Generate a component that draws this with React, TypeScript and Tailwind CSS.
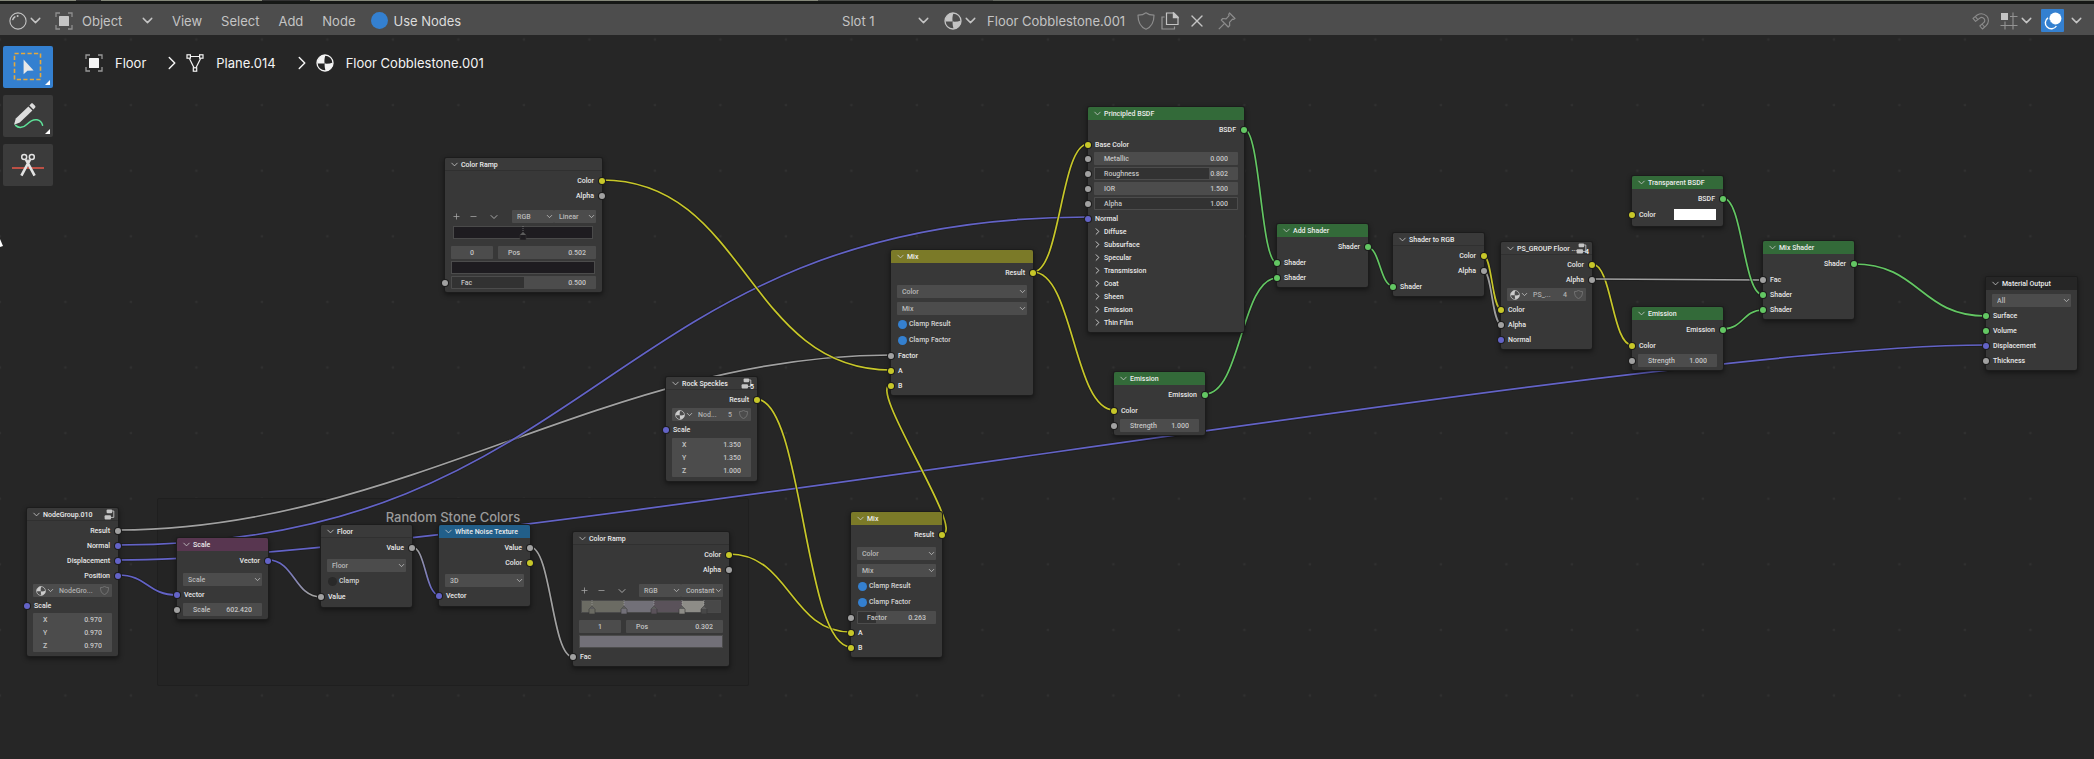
import React, { useId, useState } from 'react';
import { ChevronDown, ChevronRight, Minus, Plus, X } from 'lucide-react';

type Kind = 'color' | 'value' | 'vector' | 'shader';

const SOCKET_BG: Record<Kind, string> = {
  color: 'bg-[#c7c729]',
  value: 'bg-[#a1a1a1]',
  vector: 'bg-[#6363c7]',
  shader: 'bg-[#63c763]',
};

const LINK_COLOR: Record<Kind, string> = {
  color: '#c7c729',
  value: '#a1a1a1',
  vector: '#6363c7',
  shader: '#63c763',
};

/* ---------- links ---------- */

type Link = { from: [number, number]; to: [number, number]; a: Kind; b?: Kind };

const LINKS: Link[] = [
  { from: [118, 530], to: [891, 355], a: 'value' },
  { from: [118, 545], to: [1088, 217], a: 'vector' },
  { from: [118, 560], to: [1986, 345], a: 'vector' },
  { from: [118, 575], to: [177, 595], a: 'vector' },
  { from: [268, 560], to: [321, 597], a: 'vector', b: 'value' },
  { from: [412, 547], to: [439, 595], a: 'value', b: 'vector' },
  { from: [530, 547], to: [573, 657], a: 'value' },
  { from: [729, 554], to: [851, 632], a: 'color' },
  { from: [756, 399], to: [851, 647], a: 'color' },
  { from: [942, 534], to: [891, 385], a: 'color' },
  { from: [602, 180], to: [891, 370], a: 'color' },
  { from: [1033, 272], to: [1088, 144], a: 'color' },
  { from: [1033, 272], to: [1114, 410], a: 'color' },
  { from: [1244, 129], to: [1277, 263], a: 'shader' },
  { from: [1205, 394], to: [1277, 278], a: 'shader' },
  { from: [1367, 247], to: [1393, 286], a: 'shader' },
  { from: [1483, 255], to: [1501, 309], a: 'color' },
  { from: [1483, 270], to: [1501, 324], a: 'value' },
  { from: [1592, 264], to: [1632, 345], a: 'color' },
  { from: [1592, 279], to: [1763, 280], a: 'value' },
  { from: [1723, 198], to: [1763, 295], a: 'shader' },
  { from: [1723, 329], to: [1763, 310], a: 'shader' },
  { from: [1854, 264], to: [1986, 316], a: 'shader' },
];

// flat links get shorter handles, so they stay close to a straight line
function linkPath({ from: [x0, y0], to: [x1, y1] }: Link) {
  const dx = Math.abs(x1 - x0);
  const slope = Math.abs(y1 - y0) / Math.max(dx, 1);
  const handle = 0.5 * dx * Math.min(1, slope * 3.25);
  return `M${x0} ${y0}C${x0 + handle} ${y0} ${x1 - handle} ${y1} ${x1} ${y1}`;
}

function Links() {
  return (
    <svg className="absolute inset-0 size-full" fill="none">
      {LINKS.map((l, i) => {
        const d = linkPath(l);
        const stroke = l.b ? `url(#link-${i})` : LINK_COLOR[l.a];
        return (
          <g key={i}>
            {l.b && (
              <linearGradient id={`link-${i}`} gradientUnits="userSpaceOnUse" x1={l.from[0]} x2={l.to[0]}>
                <stop offset="0.2" stopColor={LINK_COLOR[l.a]} />
                <stop offset="0.8" stopColor={LINK_COLOR[l.b]} />
              </linearGradient>
            )}
            <path d={d} stroke="#1a1a1a" strokeOpacity="0.6" strokeWidth="3.4" />
            <path d={d} stroke={stroke} strokeWidth="1.7" />
          </g>
        );
      })}
    </svg>
  );
}

function Grid() {
  return (
    <svg className="absolute inset-0 size-full">
      <pattern id="grid" width="65.5" height="65.6" x="32.7" y="6.7" patternUnits="userSpaceOnUse">
        <circle cx="32.7" cy="32.8" r="1.3" fill="#303030" />
      </pattern>
      <rect width="100%" height="100%" fill="url(#grid)" />
    </svg>
  );
}

/* ---------- icons ---------- */

type IconProps = { className?: string };

function ObjectIcon({ className = '' }: IconProps) {
  return (
    <svg viewBox="0 0 18 18" className={`size-[18px] ${className}`} fill="none">
      <rect x="4" y="4" width="10" height="10" rx="0.6" fill="currentColor" />
      <path d="M1 5V1h4M13 1h4v4M17 13v4h-4M5 17H1v-4" stroke="currentColor" strokeOpacity="0.55" strokeWidth="1.3" />
    </svg>
  );
}

function MaterialIcon({ className = 'size-[18px]' }: IconProps) {
  return (
    <svg viewBox="0 0 18 18" className={className} fill="none">
      <circle cx="9" cy="9" r="8" stroke="currentColor" strokeWidth="1.3" />
      <path d="M8.6 9.6 1.2 9.6A8 8 0 0 1 9.6 1.1C8.4 3.8 8.2 6.6 8.6 9.6Z" fill="currentColor" />
      <path d="M8.6 9.6C11.6 9.9 14.4 9.5 16.9 8.4A8 8 0 0 1 9.7 17C8.9 14.8 8.5 12.4 8.6 9.6Z" fill="currentColor" />
    </svg>
  );
}

function EditorIcon() {
  return (
    <svg viewBox="0 0 18 18" className="size-[18px]" fill="none" stroke="currentColor">
      <circle cx="9" cy="9" r="8.1" strokeWidth="1.1" />
      <path d="M3.8 7.6C4.2 6.5 4.9 5.6 5.9 4.9" strokeWidth="1.5" strokeLinecap="round" />
      <circle cx="8.6" cy="4" r="1" fill="currentColor" stroke="none" />
    </svg>
  );
}

function MeshIcon() {
  return (
    <svg viewBox="0 0 18 18" className="size-[18px]" fill="none" stroke="currentColor" strokeWidth="1.2">
      <path d="M4 2.5h10M3.4 4.4l4.6 9.4M14.6 4.4 10 13.8" />
      <rect x="1" y="0.8" width="3.4" height="3.4" />
      <rect x="13.6" y="0.8" width="3.4" height="3.4" />
      <rect x="7.3" y="13.8" width="3.4" height="3.4" />
    </svg>
  );
}

function ShieldIcon({ className = 'size-[18px]' }: IconProps) {
  return (
    <svg viewBox="0 0 18 18" className={className} fill="none" stroke="currentColor" strokeWidth="1.2" strokeLinejoin="round">
      <path d="M9 0.8C7 2.4 4.4 3.2 1 3.2C1 9.600 2.600 14.600 9 17.200C15.400 14.600 17 9.600 17 3.200C13.600 3.200 11 2.400 9 0.800Z" />
    </svg>
  );
}

function DuplicateIcon() {
  return (
    <svg viewBox="0 0 18 18" className="size-[18px]" fill="none" stroke="currentColor" strokeWidth="1.2">
      <path d="M5.5 1h7.5l4 4v7.5H5.5z" />
      <path d="M12.4 1v4.6H17z" fill="currentColor" />
      <path d="M3.6 5H1v12h12.5v-2.6" strokeOpacity="0.6" />
    </svg>
  );
}

function PinIcon() {
  return (
    <svg viewBox="0 0 18 18" className="size-[18px]" fill="none" stroke="currentColor" strokeWidth="1.2" strokeLinejoin="round">
      <path d="M11.5 1 17 6.5l-1.6.9-.9-.3-3 3.2.2 3.2-1.5 1.5L3.3 8l1.5-1.5 3.3.3 3-3.1-.4-1.1z" />
      <path d="M6.6 11.4.8 17.2" />
    </svg>
  );
}

function MagnetIcon() {
  return (
    <svg viewBox="0 0 18 18" className="size-[18px]" fill="none" stroke="currentColor" strokeWidth="1.1" strokeLinejoin="round">
      <path d="M1 6.4 5.2 3a8 8 0 0 1 9.6 1.2 6.8 6.8 0 0 1-.6 9.4L10.4 17l-2.6-3 3.6-3.1a3 3 0 0 0-3.6-4.8L3.6 9.4z" />
      <path d="m3.4 4.6 2.4 3M10 12l2.6 3" />
    </svg>
  );
}

function SnapIcon() {
  return (
    <svg viewBox="0 0 18 18" className="size-[18px]" fill="none">
      <path d="M13 0.5v17M5 9.5v8M0.5 13.5h17M10 4.5h7.5" stroke="currentColor" strokeOpacity="0.6" strokeWidth="1.1" />
      <rect x="1" y="1" width="7" height="7" fill="currentColor" />
    </svg>
  );
}

function OverlayIcon() {
  return (
    <svg viewBox="0 0 18 18" className="size-[18px]" fill="none">
      <circle cx="11.4" cy="6.6" r="6" fill="currentColor" />
      <path d="M4 5.8A6 6 0 1 0 12.4 14" stroke="currentColor" strokeWidth="1.4" />
      <path d="M5.6 8.2a6 6 0 0 0 4.4 4.2" stroke="#3480d0" strokeWidth="1.2" strokeDasharray="1.6 1.2" />
    </svg>
  );
}

function GroupIcon() {
  return (
    <svg viewBox="0 0 11 11" className="size-[11px] shrink-0" fill="currentColor">
      <rect x="2.6" y="0.4" width="5.6" height="3.8" rx="1" />
      <rect x="0.6" y="6.2" width="6.4" height="4.2" rx="1" />
      <path d="M8.2 2h1.6v6.4H7" fill="none" stroke="currentColor" strokeWidth="0.9" />
    </svg>
  );
}

/* ---------- node building blocks ---------- */

const HEAD = {
  plain: 'bg-[#3a3a3a] shadow-[inset_0_-1px_#303030]',
  shader: 'bg-[#336a39]',
  color: 'bg-[#7b7a28]',
  vector: 'bg-[#583650]',
  texture: 'bg-[#225f8a]',
  output: 'bg-[#262626]',
};

type NodeProps = {
  title: string;
  x: number;
  y: number;
  tone?: keyof typeof HEAD;
  width?: string;
  group?: string;
  children: React.ReactNode;
};

function Node({ title, x, y, tone = 'plain', width = 'w-[91px]', group, children }: NodeProps) {
  return (
    <section
      className={`absolute ${width} rounded-xs bg-[#383838] pb-[2px] shadow-[0_0_0_1px_#1c1c1c,0_2px_5px_1px_rgba(0,0,0,0.45)]`}
      style={{ left: x, top: y }}
    >
      <header className={`mb-[2px] flex h-[13px] items-center gap-px rounded-t-xs pl-[4px] ${HEAD[tone]}`}>
        <button aria-label="Collapse" className="text-[#c8c8c8]">
          <ChevronDown className="size-[11px]" strokeWidth={1.8} />
        </button>
        <h2 className="w-0 flex-1 whitespace-nowrap text-[#ececec]">{title}</h2>
        {group !== undefined && (
          <span className="flex items-end pr-[3px] text-[#c4c4c4]">
            <GroupIcon />
            {group && <span className="-mb-px -ml-[2px] leading-[6px] text-white">{group}</span>}
          </span>
        )}
      </header>
      {children}
    </section>
  );
}

function Socket({ kind }: { kind: Kind }) {
  return <i className={`relative size-[6px] shrink-0 rounded-full ring-1 ring-[#1c1c1c] ${SOCKET_BG[kind]}`} />;
}

function Out({ kind, children }: { kind: Kind; children: string }) {
  return (
    <div className="-mr-[3px] flex h-[15px] items-center justify-end gap-[5px]">
      {children}
      <Socket kind={kind} />
    </div>
  );
}

type InProps = { kind: Kind; gap?: string; children: React.ReactNode };

function In({ kind, gap = '', children }: InProps) {
  return (
    <div className={`-ml-[3px] flex h-[15px] items-center gap-[4px] ${gap}`}>
      <Socket kind={kind} />
      {children}
    </div>
  );
}

type FieldProps = { name: string; value: string; kind: Kind; fill?: number };

function Field({ name, value, kind, fill }: FieldProps) {
  return (
    <div className="-ml-[3px] flex h-[15px] items-center gap-[3px] pr-[6px]">
      <Socket kind={kind} />
      <NumberBox name={name} value={value} fill={fill} />
    </div>
  );
}

function NumberBox({ name, value, fill }: { name: string; value: string; fill?: number }) {
  const [text, setText] = useState(value);
  return (
    <label className="relative flex h-[13px] min-w-0 flex-1 items-center rounded-[1px] bg-[#4c4c4c] p-px text-[#c4c4c4]">
      {fill !== undefined && <i className="h-full bg-[#323232]" style={{ width: `${fill * 100}%` }} />}
      <span className="absolute inset-0 flex items-center justify-between px-[10px]">
        {name}
        <input className="w-[26px] text-right" value={text} onChange={(e) => setText(e.target.value)} />
      </span>
    </label>
  );
}

function Select({ value, name, gap = '' }: { value: string; name: string; gap?: string }) {
  return (
    <div className={`flex h-[15px] items-center px-[6px] ${gap}`}>
      <SelectBox value={value} name={name} />
    </div>
  );
}

function SelectBox({ value, name }: { value: string; name: string }) {
  return (
    <div className="relative h-[13px] min-w-0 flex-1">
      <select
        aria-label={name}
        className="block size-full appearance-none rounded-[1px] bg-[#4c4c4c] pl-[5px] text-[#bababa]"
        defaultValue={value}
      >
        <option>{value}</option>
      </select>
      <ChevronDown className="pointer-events-none absolute top-[2px] right-0 size-[9px] text-[#c8c8c8]" />
    </div>
  );
}

function Check({ label, checked = false }: { label: string; checked?: boolean }) {
  const id = useId();
  return (
    <div className="flex h-[16px] items-center gap-[2px] pl-[7px] text-[#d4d4d4]">
      <input
        id={id}
        type="checkbox"
        defaultChecked={checked}
        className="size-[9px] appearance-none rounded-full bg-[#292929] checked:bg-[#3480d0]"
      />
      <label htmlFor={id}>{label}</label>
    </div>
  );
}

function DataBlock({ name, users }: { name: string; users?: string }) {
  return (
    <div className="flex h-[15px] items-center px-[6px]">
      <div className="flex h-[13px] w-full items-center rounded-[1px] bg-[#4c4c4c] px-[3px] text-[#b0b0b0]">
        <button aria-label="Browse" className="flex items-center text-[#cccccc]">
          <MaterialIcon className="size-[10px]" />
          <ChevronDown className="size-[9px]" />
        </button>
        <input aria-label="Name" className="ml-[4px] w-0 min-w-0 flex-1" defaultValue={name} />
        {users && <button className="mr-[7px]">{users}</button>}
        <button aria-label="Fake user" className="text-[#8c8c8c]">
          <ShieldIcon className="size-[9px]" />
        </button>
      </div>
    </div>
  );
}

function VectorBox({ value, gap = '' }: { value: string[]; gap?: string }) {
  return (
    <div className={`mx-[6px] mb-[2px] rounded-[1px] bg-[#4c4c4c] px-[10px] text-[#c4c4c4] ${gap}`}>
      {['X', 'Y', 'Z'].map((axis, i) => (
        <label key={axis} className="flex h-[13px] items-center justify-between">
          {axis}
          <input className="w-[26px] text-right" defaultValue={value[i]} />
        </label>
      ))}
    </div>
  );
}

function Panel({ children }: { children: string }) {
  return (
    <button className="flex h-[13px] items-center gap-px pl-[4px]">
      <ChevronRight className="size-[11px]" strokeWidth={1.8} />
      {children}
    </button>
  );
}

type Stop = { at: number; color: string };

type RampProps = {
  stops: Stop[];
  base: string;
  mode: string;
  index: string;
  pos: string;
  swatch: string;
};

function Ramp({ stops, base, mode, index, pos, swatch }: RampProps) {
  return (
    <>
      <div className="mt-[6px] flex h-[15px] items-center px-[6px] text-[#a8a8a8]">
        <button aria-label="Add stop" className="px-px">
          <Plus className="size-[9px]" />
        </button>
        <button aria-label="Remove stop" className="ml-[7px]">
          <Minus className="size-[9px]" />
        </button>
        <button aria-label="Ramp tools" className="ml-[10px]">
          <ChevronDown className="size-[12px]" />
        </button>
        <div className="ml-auto flex w-[84px]">
          <SelectBox name="Color mode" value="RGB" />
          <SelectBox name="Interpolation" value={mode} />
        </div>
      </div>
      <svg viewBox="0 0 142 15" className="mt-px ml-[7px] h-[15px] w-[142px]">
        <rect x="1" y="1" width="140" height="13" fill={base} />
        {stops.map((s, i) => (
          <rect
            key={i}
            x={i ? 1 + s.at : 1}
            y="1"
            width={(stops[i + 1]?.at ?? 140) - (i ? s.at : 0)}
            height="13"
            fill={s.color}
          />
        ))}
        <rect x="1.5" y="1.5" width="139" height="12" fill="none" stroke="#4a4a4a" />
        {stops.map((s, i) => (
          <g key={i}>
            <path d={`M${s.at + 1} 1v7`} stroke="#bbbbbb" strokeOpacity="0.6" strokeWidth="0.8" strokeDasharray="1 1" />
            <path d={`M${s.at - 2} 15v-5l3-3 3 3v5z`} fill={s.color} stroke="#333333" strokeWidth="0.6" />
            <path d={`M${s.at - 2} 10l3-3 3 3z`} fill="#5c5c5c" />
          </g>
        ))}
      </svg>
      <div className="mt-[5px] flex h-[15px] items-center gap-[5px] px-[6px] text-[#c4c4c4]">
        <input
          aria-label="Active stop"
          className="h-[13px] w-[42px] rounded-[1px] bg-[#4c4c4c] text-center"
          defaultValue={index}
        />
        <NumberBox name="Pos" value={pos} />
      </div>
      <button aria-label="Stop color" className={`mx-[6px] mt-px mb-px block h-[13px] w-[144px] border border-[#4c4c4c] ${swatch}`} />
    </>
  );
}

/* ---------- node tree ---------- */

function NodeTree() {
  return (
    <>
      <Node title="NodeGroup.010" x={27} y={508} group="">
        <Out kind="value">Result</Out>
        <Out kind="vector">Normal</Out>
        <Out kind="vector">Displacement</Out>
        <Out kind="vector">Position</Out>
        <DataBlock name="NodeGro..." />
        <In kind="vector">Scale</In>
        <VectorBox value={['0.970', '0.970', '0.970']} />
      </Node>

      <Node title="Scale" x={177} y={538} tone="vector">
        <Out kind="vector">Vector</Out>
        <Select name="Operation" value="Scale" gap="mt-[4px]" />
        <In kind="vector">Vector</In>
        <Field kind="value" name="Scale" value="602.420" />
      </Node>

      <Node title="Floor" x={321} y={525}>
        <Out kind="value">Value</Out>
        <Select name="Operation" value="Floor" gap="mt-[3px]" />
        <Check label="Clamp" />
        <In kind="value" gap="mb-px">Value</In>
      </Node>

      <Node title="White Noise Texture" x={439} y={525} tone="texture">
        <Out kind="value">Value</Out>
        <Out kind="color">Color</Out>
        <Select name="Dimensions" value="3D" gap="mt-[3px]" />
        <In kind="vector" gap="mb-px">Vector</In>
      </Node>

      <Node title="Color Ramp" x={573} y={532} width="w-[156px]">
        <Out kind="color">Color</Out>
        <Out kind="value">Alpha</Out>
        <Ramp
          base="#484848"
          mode="Constant"
          index="1"
          pos="0.302"
          swatch="bg-[#727078]"
          stops={[
            { at: 11, color: '#6b6b63' },
            { at: 43, color: '#727078' },
            { at: 73, color: '#5a525a' },
            { at: 101, color: '#8d8c87' },
            { at: 123, color: '#484848' },
          ]}
        />
        <In kind="value">Fac</In>
      </Node>

      <Node title="Mix" x={851} y={512} tone="color">
        <Out kind="color">Result</Out>
        <Select name="Data type" value="Color" gap="mt-[4px]" />
        <Select name="Blend mode" value="Mix" gap="mt-[2px]" />
        <Check label="Clamp Result" checked />
        <Check label="Clamp Factor" checked />
        <Field kind="value" name="Factor" value="0.263" fill={0.24} />
        <In kind="color">A</In>
        <In kind="color">B</In>
      </Node>

      <Node title="Rock Speckles" x={666} y={377} group="5">
        <Out kind="color">Result</Out>
        <DataBlock name="Nod..." users="5" />
        <In kind="vector">Scale</In>
        <VectorBox value={['1.350', '1.350', '1.000']} gap="mt-px" />
      </Node>

      <Node title="Color Ramp" x={445} y={158} width="w-[157px]">
        <Out kind="color">Color</Out>
        <Out kind="value">Alpha</Out>
        <Ramp
          base="#1e1c20"
          mode="Linear"
          index="0"
          pos="0.502"
          swatch="bg-[#1e1c20]"
          stops={[{ at: 70, color: '#1e1c20' }]}
        />
        <Field kind="value" name="Fac" value="0.500" fill={0.5} />
      </Node>

      <Node title="Mix" x={891} y={250} tone="color" width="w-[142px]">
        <Out kind="color">Result</Out>
        <Select name="Data type" value="Color" gap="mt-[4px]" />
        <Select name="Blend mode" value="Mix" gap="mt-[2px]" />
        <Check label="Clamp Result" checked />
        <Check label="Clamp Factor" checked />
        <In kind="value">Factor</In>
        <In kind="color">A</In>
        <In kind="color">B</In>
      </Node>

      <Node title="Principled BSDF" x={1088} y={107} tone="shader" width="w-[156px]">
        <Out kind="shader">BSDF</Out>
        <In kind="color" gap="-mb-px">Base Color</In>
        <Field kind="value" name="Metallic" value="0.000" />
        <Field kind="value" name="Roughness" value="0.802" fill={0.802} />
        <Field kind="value" name="IOR" value="1.500" />
        <Field kind="value" name="Alpha" value="1.000" fill={1} />
        <In kind="vector" gap="-mb-px">Normal</In>
        <div className="flex flex-col pb-px">
          <Panel>Diffuse</Panel>
          <Panel>Subsurface</Panel>
          <Panel>Specular</Panel>
          <Panel>Transmission</Panel>
          <Panel>Coat</Panel>
          <Panel>Sheen</Panel>
          <Panel>Emission</Panel>
          <Panel>Thin Film</Panel>
        </div>
      </Node>

      <Node title="Emission" x={1114} y={372} tone="shader">
        <Out kind="shader">Emission</Out>
        <In kind="color" gap="mt-px">Color</In>
        <Field kind="value" name="Strength" value="1.000" />
      </Node>

      <Node title="Add Shader" x={1277} y={224} tone="shader">
        <Out kind="shader">Shader</Out>
        <In kind="shader" gap="mt-px">Shader</In>
        <In kind="shader">Shader</In>
      </Node>

      <Node title="Shader to RGB" x={1393} y={233}>
        <Out kind="color">Color</Out>
        <Out kind="value">Alpha</Out>
        <In kind="shader" gap="mt-px">Shader</In>
      </Node>

      <Node title="PS_GROUP Floor ..." x={1501} y={242} group="4">
        <Out kind="color">Color</Out>
        <Out kind="value">Alpha</Out>
        <DataBlock name="PS_..." users="4" />
        <In kind="color">Color</In>
        <In kind="value">Alpha</In>
        <In kind="vector">Normal</In>
      </Node>

      <Node title="Transparent BSDF" x={1632} y={176} tone="shader">
        <Out kind="shader">BSDF</Out>
        <In kind="color" gap="mt-px mb-[2px]">
          Color
          <button aria-label="Color" className="mr-[7px] ml-auto h-[11px] w-[42px] bg-white" />
        </In>
      </Node>

      <Node title="Emission" x={1632} y={307} tone="shader">
        <Out kind="shader">Emission</Out>
        <In kind="color" gap="mt-px">Color</In>
        <Field kind="value" name="Strength" value="1.000" />
      </Node>

      <Node title="Mix Shader" x={1763} y={241} tone="shader">
        <Out kind="shader">Shader</Out>
        <In kind="value" gap="mt-px">Fac</In>
        <In kind="shader">Shader</In>
        <In kind="shader">Shader</In>
      </Node>

      <Node title="Material Output" x={1986} y={277} tone="output">
        <Select name="Target" value="All" gap="mt-[3px]" />
        <In kind="shader">Surface</In>
        <In kind="shader">Volume</In>
        <In kind="vector">Displacement</In>
        <In kind="value">Thickness</In>
      </Node>
    </>
  );
}

function Canvas() {
  return (
    <div className="absolute inset-0 overflow-hidden font-[Roboto,sans-serif] text-[7px] leading-[10px] font-medium text-[#e8e8e8]">
      <Grid />
      <div className="absolute top-[498px] left-[157px] h-[188px] w-[592px] rounded-xs border border-[#1f1f1f] bg-[#242424] pt-[9px] text-center font-[Inter,sans-serif] text-[13px] leading-[18px] text-[#9a9a9a]">
        Random Stone Colors
      </div>
      <Links />
      <NodeTree />
      <svg viewBox="0 0 4 12" className="absolute top-[239px] left-0 h-[12px] w-[4px]">
        <path d="M0 0l3 7-3 1z" fill="#ffffff" />
      </svg>
    </div>
  );
}

/* ---------- editor chrome ---------- */

function TopBar() {
  return (
    <div className="relative flex h-[31px] items-center bg-[#4d4d4d] pt-[2px] pr-[9px] pl-[9px] text-[#c4c4c4]">
      <button aria-label="Editor type" className="flex items-center">
        <EditorIcon />
        <ChevronDown className="size-[17px]" />
      </button>
      <label className="relative ml-[11px] flex items-center">
        <ObjectIcon />
        <select aria-label="Shader type" className="ml-[9px] w-[74px] appearance-none" defaultValue="Object">
          <option>Object</option>
        </select>
        <ChevronDown className="pointer-events-none absolute right-0 size-[17px]" />
      </label>
      <nav className="ml-[16px] flex gap-[19px]">
        <button>View</button>
        <button>Select</button>
        <button>Add</button>
        <button>Node</button>
      </nav>
      <label className="ml-[16px] flex items-center gap-[5px] text-[#dcdcdc]">
        <input type="checkbox" defaultChecked className="size-[17px] appearance-none rounded-full bg-[#333333] checked:bg-[#3480d0]" />
        Use Nodes
      </label>

      <div className="grow-[383]" />

      <div className="relative flex items-center">
        <select aria-label="Material slot" className="w-[90px] appearance-none" defaultValue="Slot 1">
          <option>Slot 1</option>
        </select>
        <ChevronDown className="pointer-events-none absolute right-0 size-[17px]" />
      </div>
      <button aria-label="Browse material" className="ml-[12px] flex items-center">
        <MaterialIcon />
        <ChevronDown className="size-[17px]" />
      </button>
      <input aria-label="Material name" className="ml-[8px] w-[144px]" defaultValue="Floor Cobblestone.001" />
      <button aria-label="Fake user" className="ml-[6px] text-[#8c8c8c]">
        <ShieldIcon />
      </button>
      <button aria-label="New material" className="ml-[6px]">
        <DuplicateIcon />
      </button>
      <button aria-label="Unlink material" className="ml-[8px]">
        <X className="size-[20px]" strokeWidth={1.6} />
      </button>
      <button aria-label="Pin" className="ml-[11px] text-[#8c8c8c]">
        <PinIcon />
      </button>

      <div className="grow-[740]" />

      <button aria-label="Snap" className="text-[#8c8c8c]">
        <MagnetIcon />
      </button>
      <button aria-label="Snap to" className="ml-[10px] flex items-center">
        <SnapIcon />
        <ChevronDown className="size-[17px]" />
      </button>
      <button aria-label="Overlays" className="ml-[6px] flex h-[23px] w-[23px] items-center justify-center rounded-[1px] bg-[#3480d0] text-white">
        <OverlayIcon />
      </button>
      <button aria-label="Overlay options" className="ml-[4px]">
        <ChevronDown className="size-[17px]" />
      </button>
    </div>
  );
}

function ToolCorner() {
  return (
    <svg viewBox="0 0 5 5" className="absolute right-[3px] bottom-[3px] size-[5px]">
      <path d="M5 0v5H0z" fill="#ffffff" />
    </svg>
  );
}

function Tools() {
  return (
    <div className="flex w-[53px] flex-col gap-[7px] pt-[11px] pl-[3px]">
      <button aria-label="Select box" className="relative flex h-[42px] items-center justify-center rounded-xs bg-[#3480d0]">
        <svg viewBox="0 0 30 30" className="size-[30px]" fill="none">
          <rect x="1.5" y="1.5" width="26" height="26" stroke="#e5a93c" strokeWidth="1.6" strokeDasharray="4.2 2.3" />
          <path d="M10.6 7.6v14.6l3.8-3.4 6.2-.4z" fill="#e8e8e8" />
        </svg>
        <ToolCorner />
      </button>
      <button aria-label="Annotate" className="relative flex h-[42px] items-center justify-center rounded-xs bg-[#3b3b3b]">
        <svg viewBox="0 0 34 30" className="h-[30px] w-[34px]" fill="none">
          <path d="M4.6 24.4c3 3 7.6 2.6 11.4-1.2 3.6-3.6 7-5 10-4.4 3 .6 4.8 2.6 5.6 5.4" stroke="#5fe39a" strokeWidth="1.5" strokeLinecap="round" />
          <path d="M17.4 5.4l4 4L8.8 21.6 3 23.8l1.8-6.2z" fill="#dedede" />
          <path d="M18.4 4.4l1.6-1.6c.6-.6 1.4-.6 2 0l2 2c.6.6.6 1.4 0 2l-1.6 1.6z" fill="#dedede" />
        </svg>
        <ToolCorner />
      </button>
      <button aria-label="Cut links" className="relative flex h-[42px] items-center justify-center rounded-xs bg-[#3b3b3b]">
        <svg viewBox="0 0 34 26" className="h-[26px] w-[34px]" fill="none">
          <path d="M1 16h32" stroke="#e8584a" strokeWidth="1.5" />
          <path d="M15 7.6 23.6 23.6M19 7.6 10.4 23.6" stroke="#e2e2e2" strokeWidth="2.6" />
          <circle cx="13.2" cy="5" r="2.5" stroke="#e2e2e2" strokeWidth="1.5" />
          <circle cx="20.8" cy="5" r="2.5" stroke="#e2e2e2" strokeWidth="1.5" />
        </svg>
      </button>
    </div>
  );
}

function Breadcrumbs() {
  return (
    <nav className="flex h-[20px] items-center gap-[12px] text-[#f4f4f4]">
      <a href="#object" className="flex items-center gap-[12px]">
        <ObjectIcon />
        Floor
      </a>
      <ChevronRight className="mr-[-9px] ml-[3px] size-[22px]" strokeWidth={1.6} />
      <a href="#mesh" className="flex items-center gap-[12px]">
        <MeshIcon />
        Plane.014
      </a>
      <ChevronRight className="mr-[-9px] ml-[3px] size-[22px]" strokeWidth={1.6} />
      <a href="#material" className="flex items-center gap-[12px]">
        <MaterialIcon />
        Floor Cobblestone.001
      </a>
    </nav>
  );
}

export default function App() {
  return (
    <main className="relative min-h-screen bg-[#262626] font-[Inter,sans-serif] text-[13px] leading-[18px]">
      <Canvas />
      <div className="relative h-[4px] bg-[#161816]">
        <div className="flex h-px">
          <i className="grow-[76] bg-[#85887a]" />
          <i className="grow-[25] bg-[#333333]" />
          <i className="grow-[161] bg-[#85887a]" />
          <i className="grow-[48] bg-[#333333]" />
          <i className="grow-[508] bg-[#85887a]" />
          <i className="grow-[175] bg-[#4a4c48]" />
          <i className="grow-[1101] bg-[#666a62]" />
        </div>
      </div>
      <TopBar />
      <div className="relative flex w-fit">
        <Tools />
        <div className="pt-[18px] pl-[32px]">
          <Breadcrumbs />
        </div>
      </div>
    </main>
  );
}
